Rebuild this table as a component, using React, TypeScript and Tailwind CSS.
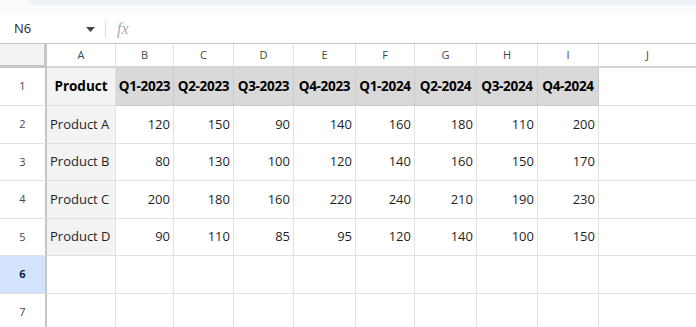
import React from 'react';

const cols = [
    { label: 'A', w: 'w-[69px]' },
    { label: 'B', w: 'w-[58px]' },
    { label: 'C', w: 'w-[60px]' },
    { label: 'D', w: 'w-[60px]' },
    { label: 'E', w: 'w-[62px]' },
    { label: 'F', w: 'w-[59px]' },
    { label: 'G', w: 'w-[62px]' },
    { label: 'H', w: 'w-[61px]' },
    { label: 'I', w: 'w-[61px]' },
];

const quarters = ['Q1-2023', 'Q2-2023', 'Q3-2023', 'Q4-2023', 'Q1-2024', 'Q2-2024', 'Q3-2024', 'Q4-2024'];

const products = [
    { name: 'Product A', values: [120, 150, 90, 140, 160, 180, 110, 200] },
    { name: 'Product B', values: [80, 130, 100, 120, 140, 160, 150, 170] },
    { name: 'Product C', values: [200, 180, 160, 220, 240, 210, 190, 230] },
    { name: 'Product D', values: [90, 110, 85, 95, 120, 140, 100, 150] },
];

const rowHeights = ['h-[38px]', 'h-[38px]', 'h-[37px]', 'h-[38px]', 'h-[37px]', 'h-[38px]', 'h-[38px]'];

const RowHeader: React.FC<{ n: number; h: string; selected?: boolean }> = ({ n, h, selected }) => (
    <div
        className={`${h} w-[47px] shrink-0 flex items-center justify-center border-r-2 border-b border-r-[#c4c7c5] border-b-[#e1e1e1] text-[11px] ${selected ? 'bg-[#d3e3fd] text-[#0b1f44] font-bold' : 'bg-white text-[#444746]'}`}
    >
        {n}
    </div>
);

export default function App() {
    return (
        <div className="w-[696px] h-[327px] overflow-hidden bg-white" style={{ fontFamily: '"Open Sans", "Noto Sans", sans-serif' }}>
            {/* top strip */}
            <div className="h-[15px] bg-[#f9fbfd]">
                <div className="h-[5px] ml-[28px] rounded-bl-[10px] bg-[#eef2f9]" />
            </div>

            {/* formula bar */}
            <div className="h-[29px] flex items-center border-b border-[#c4c7c5]">
                <div className="w-[105px] flex items-center justify-between pl-[14px] pr-[10px]">
                    <span className="text-[13px] text-[#1f1f1f]">N6</span>
                    <svg width="9" height="5" viewBox="0 0 9 5">
                        <path d="M0 0 L9 0 L4.5 5 Z" fill="#444746" />
                    </svg>
                </div>
                <div className="w-px h-[17px] bg-[#dadce0]" />
                <span className="ml-[11px] text-[16px] italic text-[#a8abae]" style={{ fontFamily: '"Liberation Serif", serif' }}>fx</span>
            </div>

            {/* column headers */}
            <div className="flex h-[24px]">
                <div className="w-[47px] shrink-0 bg-[#f3f3f3] border-r-[3px] border-b-[3px] border-[#c4c7c5]" />
                {cols.map((c) => (
                    <div key={c.label} className={`${c.w} shrink-0 flex items-center justify-center border-r border-b-2 border-r-[#e1e1e1] border-b-[#d5d5d5] text-[11px] text-[#444746]`}>
                        {c.label}
                    </div>
                ))}
                <div className="flex-1 flex items-center justify-center border-b-2 border-[#d5d5d5] text-[11px] text-[#444746]">J</div>
            </div>

            {/* row 1 */}
            <div className="flex">
                <RowHeader n={1} h={rowHeights[0]} />
                <div className={`${rowHeights[0]} ${cols[0].w} shrink-0 flex items-center justify-center bg-[#f3f3f3] border-r border-b border-[#e1e1e1] text-[13.5px] font-bold text-black`}>
                    Product
                </div>
                {quarters.map((q, i) => (
                    <div key={q} className={`${rowHeights[0]} ${cols[i + 1].w} shrink-0 flex items-center justify-center bg-[#d9d9d9] border-r border-b border-[#cccccc] text-[13.5px] font-bold text-black tracking-[-0.3px]`}>
                        {q}
                    </div>
                ))}
                <div className="flex-1 border-b border-[#e1e1e1]" />
            </div>

            {/* data rows */}
            {products.map((p, r) => (
                <div key={p.name} className="flex">
                    <RowHeader n={r + 2} h={rowHeights[r + 1]} />
                    <div className={`${rowHeights[r + 1]} ${cols[0].w} shrink-0 flex items-center pl-[3px] bg-[#f3f3f3] border-r border-b border-[#e1e1e1] text-[13px] text-[#1f1f1f]`}>
                        {p.name}
                    </div>
                    {p.values.map((v, i) => (
                        <div key={i} className={`${rowHeights[r + 1]} ${cols[i + 1].w} shrink-0 flex items-center justify-end pr-[3px] border-r border-b border-[#e1e1e1] text-[13px] text-[#1f1f1f]`}>
                            {v}
                        </div>
                    ))}
                    <div className="flex-1 border-b border-[#e1e1e1]" />
                </div>
            ))}

            {/* empty rows */}
            {[6, 7].map((n, k) => (
                <div key={n} className="flex">
                    <RowHeader n={n} h={rowHeights[5 + k]} selected={n === 6} />
                    {cols.map((c) => (
                        <div key={c.label} className={`${rowHeights[5 + k]} ${c.w} shrink-0 border-r border-b border-[#e1e1e1]`} />
                    ))}
                    <div className="flex-1 border-b border-[#e1e1e1]" />
                </div>
            ))}
        </div>
    );
}
